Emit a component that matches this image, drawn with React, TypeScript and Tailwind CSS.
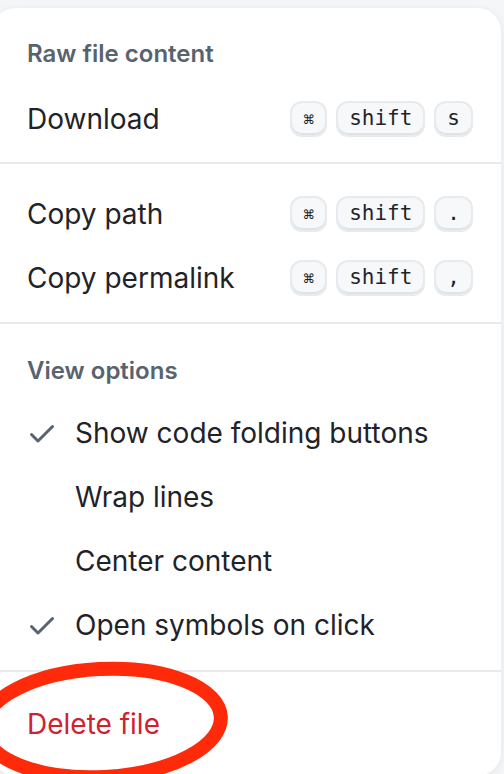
import { ReactNode } from 'react';

const sans = "font-['Inter','Liberation_Sans',Arial,sans-serif]";

function Key({ children, small }: { children: ReactNode; small?: boolean }) {
  return (
    <span
      className={`flex h-[36px] min-w-[36px] items-center justify-center rounded-[12px] border-2 border-[#e8ebee] bg-[#f6f8fa] px-[11px] font-['DejaVu_Sans_Mono',monospace] text-[#1f2328] shadow-[inset_0_-2px_0_#dfe3e8] ${
        small ? 'text-[18px]' : 'text-[21px]'
      }`}
    >
      {children}
    </span>
  );
}

function Check() {
  return (
    <svg viewBox="0 0 16 16" className="h-[32px] w-[32px]" fill="#59636e">
      <path d="M13.78 4.22a.75.75 0 0 1 0 1.06l-7.25 7.25a.75.75 0 0 1-1.06 0L2.22 9.28a.751.751 0 0 1 .018-1.042.751.751 0 0 1 1.042-.018L6 10.94l6.72-6.72a.75.75 0 0 1 1.06 0Z" />
    </svg>
  );
}

function Heading({ children }: { children: ReactNode }) {
  return (
    <div className="flex h-[40px] items-center pl-[35px] text-[24px] font-semibold text-[#59636e]">
      {children}
    </div>
  );
}

function Item({ label, keys }: { label: string; keys?: string[] }) {
  return (
    <div className="flex h-[64px] items-center justify-between pl-[35px] pr-[28px] text-[28px] text-[#1f2328]">
      <span>{label}</span>
      {keys && (
        <div className="flex items-center gap-[9px]">
          {keys.map((k, i) => (
            <Key key={i} small={k === '⌘'}>
              {k}
            </Key>
          ))}
        </div>
      )}
    </div>
  );
}

function Option({ label, checked }: { label: string; checked?: boolean }) {
  return (
    <div className="flex h-[64px] items-center pl-[34px] text-[28px] text-[#1f2328]">
      <span className="mr-[17px] flex w-[32px] items-center justify-center">
        {checked && <Check />}
      </span>
      <span>{label}</span>
    </div>
  );
}

function Divider() {
  return <div className="h-[2px] bg-[#e8eaed]" />;
}

export default function App() {
  return (
    <div className={`relative h-[774px] w-[504px] overflow-hidden bg-[#f5f6f7] pt-[8px] ${sans}`}>
      <div className="-ml-[8px] h-[768px] w-[509px] rounded-[24px] bg-white shadow-[0_2px_10px_rgba(31,35,40,0.08)]">
        {/* Raw file content */}
        <div className="pt-[26px] pb-[11px]">
          <Heading>Raw file content</Heading>
          <div className="mt-[13px]">
            <Item label="Download" keys={['⌘', 'shift', 's']} />
          </div>
        </div>
        <Divider />

        {/* Copy */}
        <div className="pt-[18px] pb-[12px]">
          <Item label="Copy path" keys={['⌘', 'shift', '.']} />
          <Item label="Copy permalink" keys={['⌘', 'shift', ',']} />
        </div>
        <Divider />

        {/* View options */}
        <div className="pt-[27px] pb-[13px]">
          <Heading>View options</Heading>
          <div className="mt-[10px]">
            <Option label="Show code folding buttons" checked />
            <Option label="Wrap lines" />
            <Option label="Center content" />
            <Option label="Open symbols on click" checked />
          </div>
        </div>
        <Divider />

        <div className="pt-[20px]">
          <div className="flex h-[64px] items-center pl-[35px] text-[28px] text-[#cf222e]">
            Delete file
          </div>
        </div>
      </div>

      {/* annotation ring */}
      <svg className="pointer-events-none absolute left-0 top-0" width="504" height="774">
        <ellipse
          cx="102"
          cy="723"
          rx="119"
          ry="54"
          fill="none"
          stroke="#fe2a0a"
          strokeWidth="14"
          transform="rotate(-3 102 723)"
        />
      </svg>
    </div>
  );
}
